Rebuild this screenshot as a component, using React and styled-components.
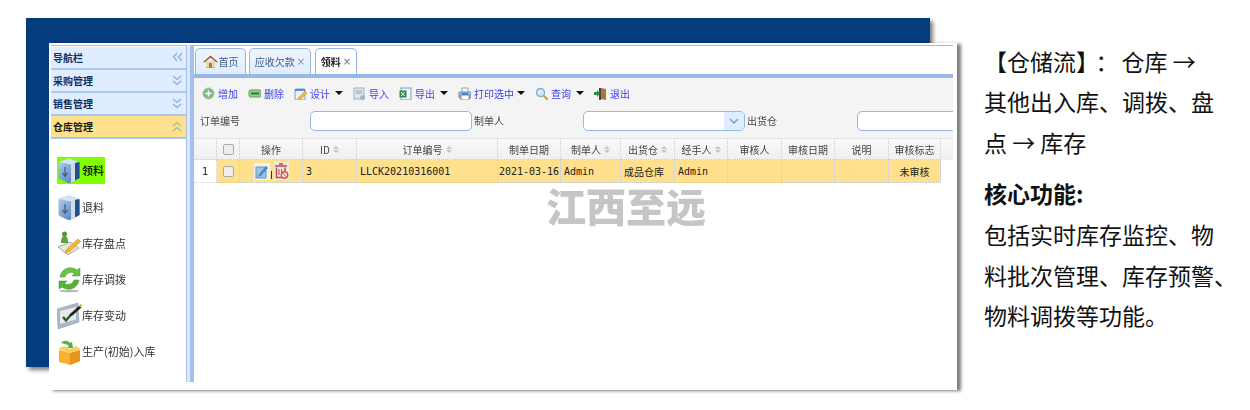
import React from "react";
import styled, { createGlobalStyle } from "styled-components";

const Global = createGlobalStyle`
  html, body { margin: 0; padding: 0; background: #fff; }
  body { font-family: "Noto Sans CJK SC", "Noto Sans", sans-serif; overflow: hidden; }
  * { box-sizing: border-box; }
`;

const Page = styled.div`
  position: relative;
  width: 1250px;
  height: 410px;
  display: flex;
  align-items: flex-start;
  padding: 43px 0 0 49px;
  background: #fff;
`;
const Backdrop = styled.div`
  position: absolute;
  left: 26px;
  top: 18px;
  width: 904px;
  height: 349px;
  background: #043c7d;
  box-shadow: 3px 3px 4px rgba(0, 0, 0, 0.5);
`;
const Shot = styled.div`
  position: relative;
  flex: none;
  width: 908px;
  height: 347px;
  display: flex;
  padding: 2px 4px 8px 2px;
  background: #fff;
  box-shadow: 4px 1px 3px rgba(0, 0, 0, 0.5);
`;
const Blurred = styled.div`
  display: flex;
  width: 100%;
  height: 100%;
  filter: blur(0.45px);
`;
const Sidebar = styled.aside`
  flex: none;
  width: 135px;
  display: flex;
  flex-direction: column;
  padding-top: 1px;
  border-top: 1px solid #95b8e7;
`;
const AccordionHead = styled.div`
  flex: none;
  height: 23px;
  display: flex;
  align-items: center;
  justify-content: space-between;
  padding: 0 4px 0 2px;
  font-size: 10px;
  font-weight: 700;
  color: ${(p) => (p.$active ? "#1a1a10" : "#0e2d5f")};
  background: ${(p) => (p.$active ? "#ffe08c" : "#e0ecff")};
  border-bottom: 2px solid #a9c6ef;
`;
const MenuList = styled.div`
  display: flex;
  flex-direction: column;
  padding: 18px 0 0 6px;
`;
const MenuItem = styled.div`
  display: flex;
  align-items: center;
  align-self: flex-start;
  height: 27px;
  margin-bottom: ${(p) => (p.$active ? "10px" : "9px")};
  font-size: 11px;
  line-height: 27px;
  color: ${(p) => (p.$active ? "#000" : "#333")};
  font-weight: ${(p) => (p.$active ? 500 : 400)};
  background: ${(p) => (p.$active ? "#7fff00" : "transparent")};
  padding-right: ${(p) => (p.$active ? "1px" : "0")};
`;
const MenuIcon = styled.span`
  flex: none;
  width: 25px;
  height: 27px;
  display: block;
`;
const Splitter = styled.div`
  flex: none;
  width: 8px;
  border-left: 1.5px solid #a4c1ee;
  border-right: 4px solid #a4c1ee;
  background: #dce8fb;
`;
const Main = styled.main`
  position: relative;
  flex: 1;
  min-width: 0;
  display: flex;
  flex-direction: column;
  overflow: hidden;
  border-top: 1px solid #95b8e7;
`;
const TabStrip = styled.div`
  flex: none;
  height: 32px;
  display: flex;
  align-items: flex-end;
  gap: 3px;
  padding-left: 1px;
  border-bottom: 4px solid #95b8e7;
`;
const Tab = styled.div`
  height: 26px;
  width: ${(p) => p.$w}px;
  display: flex;
  align-items: center;
  justify-content: center;
  gap: 1px;
  font-size: 10px;
  font-weight: ${(p) => (p.$active ? 700 : 400)};
  color: ${(p) => (p.$active ? "#222" : "#3f5d86")};
  background: ${(p) => (p.$active ? "#fff" : "linear-gradient(#eff5ff, #e0ecff)")};
  border: 1px solid #95b8e7;
  border-bottom: none;
  border-radius: 5px 5px 0 0;
  margin-left: ${(p) => (p.$active ? "1px" : "0")};
`;
const TabClose = styled.span`
  font-size: 10px;
  margin-left: 1px;
  color: #7f8fa8;
  font-family: "DejaVu Sans", sans-serif;
`;
const ToolPanel = styled.div`
  flex: none;
  height: 60px;
  background: #f4f4f4;
  display: flex;
  flex-direction: column;
`;
const ToolRow = styled.div`
  height: 30px;
  display: flex;
  align-items: center;
  gap: 10px;
  padding: 0 0 0 8px;
`;
const ToolButton = styled.div`
  display: flex;
  align-items: center;
  gap: 3px;
  font-size: 10px;
  color: #4040ee;
`;
const Caret = styled.span`
  width: 0;
  height: 0;
  margin-left: ${(p) => p.$gap}px;
  border-left: 4px solid transparent;
  border-right: 4px solid transparent;
  border-top: 4px solid #111;
`;
const FormRow = styled.div`
  height: 30px;
  display: flex;
  align-items: flex-start;
  padding: 3px 0 0 6px;
  white-space: nowrap;
`;
const FieldLabel = styled.label`
  flex: none;
  width: ${(p) => p.$w}px;
  height: 20px;
  line-height: 20px;
  font-size: 10px;
  color: #444;
`;
const TextInput = styled.div`
  flex: none;
  width: 162px;
  height: 20px;
  margin-right: 2px;
  background: #fff;
  border: 1px solid #95b8e7;
  border-radius: 5px;
  display: flex;
  justify-content: flex-end;
  overflow: hidden;
`;
const ComboArrow = styled.span`
  width: 20px;
  display: flex;
  align-items: center;
  justify-content: center;
  background: #e0ecff;
`;
const GridRow = styled.div`
  flex: none;
  height: ${(p) => p.$h}px;
  display: flex;
  background: ${(p) => (p.$head ? "linear-gradient(#f9f9f9, #efefef)" : "transparent")};
  border-top: ${(p) => (p.$head ? "1px solid #e4e4e4" : "none")};
`;
const Cell = styled.div`
  flex: none;
  width: ${(p) => p.$w}px;
  display: flex;
  align-items: center;
  justify-content: ${(p) => p.$align || "center"};
  gap: 3px;
  padding-left: ${(p) => (p.$align ? "3px" : "0")};
  font-size: 10px;
  font-family: ${(p) =>
    p.$mono ? '"DejaVu Sans Mono", "Noto Sans CJK SC", monospace' : '"Noto Sans CJK SC", sans-serif'};
  color: ${(p) => (p.$head ? "#444" : "#222")};
  background: ${(p) => (p.$head ? "transparent" : p.$num ? "#fff" : "#ffe08c")};
  border-right: 1px dotted #ccc;
  border-bottom: 1px dotted #ccc;
  white-space: nowrap;
`;
const CheckBox = styled.span`
  width: 11px;
  height: 11px;
  border: 1px solid #aaa;
  border-radius: 2px;
  background: #eee;
`;
const SortMark = styled.span`
  display: inline-flex;
  flex-direction: column;
  gap: 1px;
  &::before,
  &::after {
    content: "";
    width: 0;
    height: 0;
    border-left: 3px solid transparent;
    border-right: 3px solid transparent;
  }
  &::before { border-bottom: 3px solid #c6c6c6; }
  &::after { border-top: 3px solid #c6c6c6; }
`;
const OpsDivider = styled.span`
  width: 1px;
  height: 8px;
  margin: 8px -1px 0 -2px;
  background: #333;
`;
const Watermark = styled.div`
  position: absolute;
  left: 352px;
  top: 139px;
  font-size: 40px;
  line-height: 40px;
  font-weight: 900;
  color: #c5c5c5;
  white-space: nowrap;
`;
const Notes = styled.section`
  flex: none;
  margin: -2px 0 0 27px;
  font-size: 23px;
  color: #111;
`;
const NoteLine = styled.div`
  white-space: nowrap;
  height: ${(p) => p.$h || 41}px;
  line-height: ${(p) => p.$h || 41}px;
  margin-top: ${(p) => p.$gap || 0}px;
  font-weight: ${(p) => (p.$bold ? 700 : 400)};
`;
const NoteColon = styled.span`
  margin: 0 3px 0 8px;
`;

/* ---------- drawings ---------- */
const Chevrons = ({ dir = "down", color = "#7fb2ea" }) => {
  const paths = {
    down: ["M1 1l4 3.5L9 1", "M1 6l4 3.5L9 6"],
    up: ["M1 5l4-3.5L9 5", "M1 10l4-3.5L9 10"],
    left: ["M5 1L1.5 5 5 9", "M10 1L6.500 5 10 9"],
  }[dir];
  return (
    <svg width="10" height="11" viewBox="0 0 10 11" fill="none" stroke={color} strokeWidth="1.3">
      {paths.map((d) => <path key={d} d={d} />)}
    </svg>
  );
};
const Cube = () => (
  <svg width="25" height="27" viewBox="0 0 25 27">
    <defs>
      <linearGradient id="cubeFace" x1="0" y1="0" x2="1" y2="1">
        <stop offset="0" stopColor="#b9d2ee" />
        <stop offset="1" stopColor="#3f74b4" />
      </linearGradient>
    </defs>
    <path d="M12 1.500l9 3 1.500 1.500v15L13 26h-2L2.500 22 1.500 20V6l1-1.500z" fill="url(#cubeFace)" />
    <path d="M15 7l7.500-2v16L15 25z" fill="#214f8c" />
    <path d="M14 7l4-1.500V24l-4 1.500z" fill="#d3dce6" />
    <path d="M2.500 5L12 1.500l9.500 3.200L13 7.500z" fill="#d7e4f2" />
    <path d="M8 10v9M5.500 16l2.500 3.500 2.500-3.500" stroke="#4a5f78" strokeWidth="1.300" fill="none" />
  </svg>
);
const Clipboard = () => (
  <svg width="25" height="27" viewBox="0 0 25 27">
    <path d="M1 17l12-5 9 6-11 7z" fill="#e9e6dc" stroke="#a9a9a0" />
    <circle cx="7.500" cy="4" r="2.500" fill="#4d9a32" />
    <path d="M4 13c0-5 1-7 3.500-7S11 8 11 13z" fill="#5aa63c" />
    <path d="M9 20l12-11 2.500 2.500L12 22l-4 1z" fill="#f2b92e" stroke="#c98a12" strokeWidth=".6" />
  </svg>
);
const Refresh = () => (
  <svg width="25" height="27" viewBox="0 0 25 27">
    <ellipse cx="12" cy="25" rx="10" ry="1.500" fill="#bbb" />
    <path d="M3 11C4 5 9 1 15 2c2 .2 4 1 5 2l3-2v8h-8l2.500-2.500C14 5.500 9 7 8 11z" fill="#6cc04a" stroke="#3f962a" strokeWidth=".5" />
    <path d="M22 14c-1 6-6 10-12 9-2-.3-4-1-5-2l-3 2v-8h8l-2.500 2.500C11 19.500 16 18 17 14z" fill="#58b23a" stroke="#3f962a" strokeWidth=".5" />
  </svg>
);
const Monitor = () => (
  <svg width="25" height="27" viewBox="0 0 25 27">
    <path d="M0 7L21 1v4L22 20 1 27z" fill="#a9b8c6" stroke="#8796a5" strokeWidth=".5" />
    <path d="M3 9l16-4v12.500L3 22z" fill="#e5ebe6" />
    <path d="M6 15l3 3.500 6-7" stroke="#2c5c20" strokeWidth="2.400" fill="none" />
    <path d="M13 12l9-8 2.500 1.500-9 8-3 1z" fill="#222" />
    <path d="M22 3l1.500-1 1.500 1.500-1 1.500z" fill="#d9a520" />
  </svg>
);
const Parcel = () => (
  <svg width="25" height="27" viewBox="0 0 25 27">
    <path d="M2 12l11 3 10-3v11l-10 4-11-3z" fill="#f6b22d" />
    <path d="M13 15l10-3v11l-10 4z" fill="#e8961a" />
    <path d="M1 11l5-3 7 3 6-3 5 3-11 4z" fill="#fbcf56" />
    <path d="M4 5c3-3 7-3 9 0l2-1 1 6-6 0 2-2c-2-2-5-2-8-3z" fill="#53b43a" />
  </svg>
);
const Home = () => (
  <svg width="15" height="13" viewBox="0 0 15 13">
    <path d="M3 6v7h9V6z" fill="#ecd7a6" />
    <path d="M6 8h3v5H6z" fill="#a8793f" />
    <path d="M0 7l7.500-6.500L15 7l-1.500.5-6-5-6 5z" fill="#a25a26" />
    <path d="M3 13h9" stroke="#6fae4b" />
  </svg>
);
const tools = {
  add: (
    <>
      <circle cx="6.500" cy="6.500" r="5.500" fill="#7fb786" stroke="#a9c7ab" />
      <path d="M6.500 3.500v6M3.500 6.500h6" stroke="#fff" strokeWidth="1.500" />
    </>
  ),
  del: (
    <>
      <rect x="1" y="3" width="12" height="7" rx="1.500" fill="#9ccf8d" stroke="#5c9a58" />
      <rect x="3" y="5.500" width="8" height="2" fill="#1f7d38" />
    </>
  ),
  design: (
    <>
      <rect x="1" y="2" width="10" height="11" rx="1" fill="#eef3fa" stroke="#7a9cc7" />
      <path d="M1 3h10" stroke="#3f6fb0" strokeWidth="1.500" />
      <path d="M4 11l7-7 2 2-7 7-3 .5z" fill="#ecb93c" stroke="#b58a20" strokeWidth=".4" />
    </>
  ),
  imp: (
    <>
      <rect x="1" y="1" width="10" height="11" fill="#dfe6ee" stroke="#9fb0c2" />
      <path d="M3 4h6M3 6h6" stroke="#8fa3ba" />
      <circle cx="9.500" cy="10.500" r="2.500" fill="#a9b4bf" />
    </>
  ),
  exp: (
    <>
      <rect x="2" y="1" width="10" height="12" fill="#eef4fb" stroke="#7a9cc7" />
      <rect x="0.500" y="3.500" width="7" height="7" fill="#2c8a4b" />
      <path d="M2 5l3.500 4M5.500 5L2 9" stroke="#fff" />
    </>
  ),
  print: (
    <>
      <path d="M4 1h6v5H4z" fill="#fff" stroke="#8aa" />
      <rect x="1" y="5" width="12" height="6" rx="1" fill="#a8bdd3" stroke="#6f8aa8" />
      <path d="M3 8h8v5H3z" fill="#fff" stroke="#6f8aa8" />
      <path d="M4 7h6" stroke="#3b86d4" strokeWidth="2" />
    </>
  ),
  search: (
    <>
      <circle cx="5.500" cy="5.500" r="4" fill="#d6ebf9" stroke="#7eaed2" strokeWidth="1.300" />
      <path d="M8.500 8.500L13 13" stroke="#d69a2a" strokeWidth="2" />
    </>
  ),
  exit: (
    <>
      <path d="M7 1l5 1v11l-5-1z" fill="#a8763a" />
      <rect x="5" y="1" width="2" height="12" fill="#444" />
      <path d="M0 5h3V3l3 3.500L3 10V8H0z" fill="#2f8b3e" />
    </>
  ),
};
const ToolIcon = ({ name }) => (
  <svg width="13" height="13" viewBox="0 0 13 13">{tools[name]}</svg>
);
const EditIcon = () => (
  <svg width="16" height="17" viewBox="0 0 16 17">
    <rect width="16" height="17" fill="#eef3f6" />
    <rect x="2" y="4" width="10" height="11" fill="#9fc2de" stroke="#6b93b6" />
    <path d="M5 11l7-8 2 2-7 8-3 1z" fill="#4e8cc2" />
  </svg>
);
const TrashIcon = () => (
  <svg width="15" height="18" viewBox="0 0 15 18">
    <rect width="15" height="18" fill="#f3ecd8" />
    <path d="M1 4h12M5 2h4" stroke="#c0454f" strokeWidth="1.600" />
    <path d="M2.500 5.500v10h5" fill="none" stroke="#c0454f" strokeWidth="1.500" />
    <path d="M5 7v6M7.500 7v3" stroke="#c0454f" />
    <path d="M11 5.500V9" stroke="#c0454f" strokeWidth="1.500" />
    <circle cx="10.500" cy="13" r="3.200" fill="none" stroke="#d05058" strokeWidth="1.400" />
    <path d="M8.500 11l4 4" stroke="#d05058" />
  </svg>
);
const ComboChevron = () => (
  <svg width="10" height="7" viewBox="0 0 10 7" fill="none" stroke="#62a8e0" strokeWidth="1.500">
    <path d="M1 1l4 4 4-4" />
  </svg>
);

/* ---------- data ---------- */
const heads = [
  { label: "增加", icon: "add" },
  { label: "删除", icon: "del" },
  { label: "设计", icon: "design", caret: 2 },
  { label: "导入", icon: "imp" },
  { label: "导出", icon: "exp", caret: 2 },
  { label: "打印选中", icon: "print", caret: 0 },
  { label: "查询", icon: "search", caret: 2 },
  { label: "退出", icon: "exit" },
];
const menu = [
  { label: "领料", Icon: Cube, active: true },
  { label: "退料", Icon: Cube },
  { label: "库存盘点", Icon: Clipboard },
  { label: "库存调拨", Icon: Refresh },
  { label: "库存变动", Icon: Monitor },
  { label: "生产(初始)入库", Icon: Parcel },
];
const columns = [
  { w: 23, row: "1", num: true, mono: true },
  { w: 23, check: true },
  { w: 63, head: "操作", ops: true },
  { w: 54, head: "ID", sort: true, row: "3", left: true, mono: true },
  { w: 141, head: "订单编号", sort: true, row: "LLCK20210316001", left: true, mono: true },
  { w: 63, head: "制单日期", row: "2021-03-16", mono: true },
  { w: 60, head: "制单人", sort: true, row: "Admin", left: true, mono: true },
  { w: 54, head: "出货仓", sort: true, row: "成品仓库", left: true },
  { w: 53, head: "经手人", sort: true, row: "Admin", left: true, mono: true },
  { w: 54, head: "审核人" },
  { w: 53, head: "审核日期" },
  { w: 54, head: "说明" },
  { w: 52, head: "审核标志", row: "未审核" },
];

export default function App() {
  return (
    <Page>
      <Global />
      <Backdrop />
      <Shot>
        <Blurred>
          <Sidebar>
            <AccordionHead>导航栏<Chevrons dir="left" /></AccordionHead>
            <AccordionHead>采购管理<Chevrons /></AccordionHead>
            <AccordionHead>销售管理<Chevrons /></AccordionHead>
            <AccordionHead $active>仓库管理<Chevrons dir="up" color="#9fb9a8" /></AccordionHead>
            <MenuList>
              {menu.map(({ label, Icon, active }) => (
                <MenuItem key={label} $active={active}>
                  <MenuIcon><Icon /></MenuIcon>
                  {label}
                </MenuItem>
              ))}
            </MenuList>
          </Sidebar>
          <Splitter />
          <Main>
            <TabStrip>
              <Tab $w={51}><Home />首页</Tab>
              <Tab $w={62}>应收欠款<TabClose>×</TabClose></Tab>
              <Tab $w={42} $active>领料<TabClose>×</TabClose></Tab>
            </TabStrip>
            <ToolPanel>
              <ToolRow>
                {heads.map((h) => (
                  <ToolButton key={h.label}>
                    <ToolIcon name={h.icon} />
                    {h.label}
                    {h.caret !== undefined && <Caret $gap={h.caret} />}
                  </ToolButton>
                ))}
              </ToolRow>
              <FormRow>
                <FieldLabel $w={110}>订单编号</FieldLabel>
                <TextInput />
                <FieldLabel $w={109}>制单人</FieldLabel>
                <TextInput><ComboArrow><ComboChevron /></ComboArrow></TextInput>
                <FieldLabel $w={110}>出货仓</FieldLabel>
                <TextInput />
              </FormRow>
            </ToolPanel>
            <GridRow $head $h={22}>
              {columns.map((c, i) => (
                <Cell key={i} $w={c.w} $head>
                  {c.check && <CheckBox />}
                  {c.head}
                  {c.sort && <SortMark />}
                </Cell>
              ))}
            </GridRow>
            <GridRow $h={23}>
              {columns.map((c, i) => (
                <Cell key={i} $w={c.w} $mono={c.mono} $num={c.num} $align={c.left ? "flex-start" : undefined}>
                  {c.check && <CheckBox />}
                  {c.ops && (<><EditIcon /><OpsDivider /><TrashIcon /></>)}
                  {c.row}
                </Cell>
              ))}
            </GridRow>
            <Watermark>江西至远</Watermark>
          </Main>
        </Blurred>
      </Shot>
      <Notes>
        <NoteLine $h={40}>【仓储流】<NoteColon>：</NoteColon>仓库 →</NoteLine>
        <NoteLine>其他出入库、调拨、盘</NoteLine>
        <NoteLine>点 → 库存</NoteLine>
        <NoteLine $bold $gap={10}>核心功能:</NoteLine>
        <NoteLine $h={40.5}>包括实时库存监控、物</NoteLine>
        <NoteLine $h={40.5}>料批次管理、库存预警、</NoteLine>
        <NoteLine $h={40.5}>物料调拨等功能。</NoteLine>
      </Notes>
    </Page>
  );
}
